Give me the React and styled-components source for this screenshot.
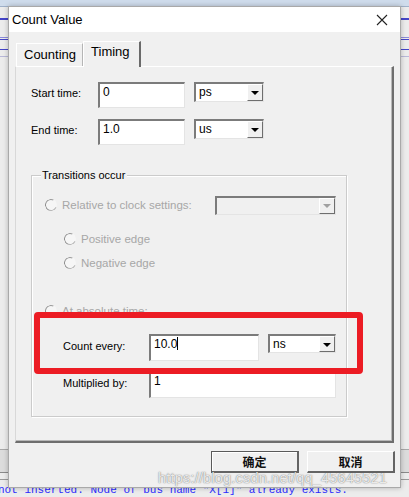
import React from "react";
import styled, { createGlobalStyle } from "styled-components";

const GlobalStyle = createGlobalStyle`
  html, body {
    margin: 0;
    padding: 0;
    background: #ececec;
  }
  body {
    font-family: "Liberation Sans", Arial, sans-serif;
  }
`;

const Screen = styled.div`
  position: relative;
  width: 409px;
  height: 497px;
  overflow: hidden;
  background: #ececec;
`;

const Backdrop = styled.div`
  display: flex;
  flex-direction: column;
  height: 100%;
`;

const TopBand = styled.div`
  height: 6px;
  background: #cfdcec;
  border-bottom: 1px solid #9fb0c8;
`;

const Rule = styled.div`
  height: ${(p) => p.$h || 1}px;
  margin-top: ${(p) => p.$mt || 0}px;
  background: ${(p) => p.$color || "#4545c8"};
`;

const Spacer = styled.div`
  flex: 1;
`;

const GreyBand = styled.div`
  height: 22px;
  background: #dcdcdc;
  border-top: 1px solid #a8a8a8;
  border-bottom: 1px solid #8a8a8a;
`;

const LogLine = styled.div`
  height: 13px;
  margin-top: 4px;
  margin-left: -2px;
  white-space: pre;
  font-family: "Liberation Mono", "Courier New", monospace;
  font-size: 11px;
  line-height: 13px;
  color: #2b2bff;
`;

const Dialog = styled.div`
  position: absolute;
  left: 8px;
  top: 6px;
  width: 393px;
  height: 482px;
  box-sizing: border-box;
  background: #f0f0f0;
  border: 1px solid #a9a9a9;
  box-shadow: 0 0 5px rgba(0, 0, 0, 0.25);
  display: flex;
  flex-direction: column;
`;

const TitleBar = styled.div`
  height: 25px;
  background: #ffffff;
  display: flex;
  align-items: center;
  justify-content: space-between;
  padding-left: 3px;
`;

const Title = styled.span`
  font-size: 13px;
  color: #000;
  margin-top: -1px;
`;

const CloseButton = styled.div`
  width: 36px;
  height: 25px;
  display: flex;
  align-items: center;
  justify-content: center;
`;

const Body = styled.div`
  flex: 1;
  display: flex;
  flex-direction: column;
  padding: 9px 0 0 6px;
`;

const TabStrip = styled.div`
  display: flex;
  align-items: flex-end;
  height: 25px;
  padding-left: 1px;
`;

const Tab = styled.div`
  box-sizing: border-box;
  height: ${(p) => (p.$active ? 26 : 23)}px;
  margin-bottom: ${(p) => (p.$active ? -1 : 0)}px;
  padding: ${(p) => (p.$active ? "2px 9px 0 7px" : "3px 6px 0 7px")};
  font-size: 13px;
  color: #000;
  background: #f0f0f0;
  border-top: 1px solid #ffffff;
  border-left: 1px solid #ffffff;
  border-right: ${(p) => (p.$active ? "2px solid #6a6a6a" : "1px solid #b5b5b5")};
  position: relative;
  z-index: ${(p) => (p.$active ? 2 : 1)};
`;

const Panel = styled.div`
  box-sizing: border-box;
  width: 379px;
  height: 377px;
  border-top: 1px solid #ffffff;
  border-left: 1px solid #d8d8d8;
  border-right: 2px solid #6e6e6e;
  border-bottom: 2px solid #6e6e6e;
  box-shadow: inset -1px -1px 0 #b8b8b8;
  padding: 15px 0 0 15px;
  display: flex;
  flex-direction: column;
`;

const FieldRow = styled.div`
  display: flex;
  align-items: flex-start;
  margin-top: ${(p) => p.$mt || 0}px;
  margin-left: ${(p) => p.$indent || 0}px;
`;

const Label = styled.span`
  width: ${(p) => p.$w}px;
  font-size: 11px;
  color: #000;
  line-height: ${(p) => p.$lh || 22}px;
  flex-shrink: 0;
`;

const TextBox = styled.div`
  box-sizing: border-box;
  width: ${(p) => p.$w}px;
  height: ${(p) => p.$h || 26}px;
  background: #ffffff;
  border-top: 2px solid #7b7b7b;
  border-left: 2px solid #7b7b7b;
  border-right: 1px solid #e4e4e4;
  border-bottom: 1px solid #e4e4e4;
  padding: 1px 0 0 3px;
  font-size: 12px;
  line-height: 14px;
  color: #000;
`;

const Caret = styled.span`
  display: inline-block;
  width: 1px;
  height: 13px;
  background: #000;
  vertical-align: -2px;
`;

const Select = styled.div`
  box-sizing: border-box;
  width: ${(p) => p.$w}px;
  height: ${(p) => p.$h || 20}px;
  margin-left: ${(p) => p.$ml || 0}px;
  background: ${(p) => (p.$disabled ? "#f0f0f0" : "#ffffff")};
  border-top: 2px solid #7b7b7b;
  border-left: 2px solid #7b7b7b;
  border-right: 1px solid #e4e4e4;
  border-bottom: 1px solid #e4e4e4;
  display: flex;
  align-items: stretch;
  justify-content: space-between;
  font-size: 12px;
  color: #000;
`;

const SelectText = styled.span`
  padding-left: 3px;
  line-height: 16px;
`;

const DropButton = styled.div`
  box-sizing: border-box;
  width: 16px;
  background: #f0f0f0;
  border-top: 1px solid #ffffff;
  border-left: 1px solid #ffffff;
  border-right: 1px solid #6e6e6e;
  border-bottom: 1px solid #6e6e6e;
  display: flex;
  align-items: center;
  justify-content: center;
  &::after {
    content: "";
    border-left: 4px solid transparent;
    border-right: 4px solid transparent;
    border-top: 4px solid ${(p) => (p.$disabled ? "#a0a0a0" : "#000")};
    margin-top: 1px;
  }
`;

const Group = styled.div`
  box-sizing: border-box;
  width: 316px;
  height: 242px;
  margin-top: 30px;
  border: 1px solid #cbcbcb;
  box-shadow: inset 1px 1px 0 #ffffff, 1px 1px 0 #ffffff;
  padding: 0 0 0 13px;
  display: flex;
  flex-direction: column;
`;

const Legend = styled.span`
  align-self: flex-start;
  margin: -8px 0 0 -4px;
  padding: 0 2px 0 1px;
  height: 14px;
  line-height: 14px;
  background: #f0f0f0;
  font-size: 11px;
  color: #000;
`;

const RadioRow = styled.div`
  display: flex;
  align-items: center;
  height: ${(p) => p.$h || 16}px;
  margin-top: ${(p) => p.$mt || 0}px;
  margin-left: ${(p) => p.$indent || 0}px;
`;

const Radio = styled.span`
  box-sizing: border-box;
  width: 12px;
  height: 12px;
  border-radius: 50%;
  border: 1.5px solid transparent;
  border-left-color: #8d8d8d;
  border-top-color: #9a9a9a;
  border-bottom-color: #b9b9b9;
  background: #f6f6f6;
  margin-right: 5px;
  transform: rotate(-20deg);
  flex-shrink: 0;
`;

const RadioLabel = styled.span`
  font-size: 11.5px;
  color: #a7a7a7;
  width: ${(p) => (p.$w ? `${p.$w}px` : "auto")};
`;

const ButtonRow = styled.div`
  display: flex;
  justify-content: flex-end;
  gap: 8px;
  margin-top: 8px;
  padding-right: 5px;
`;

const Button = styled.div`
  box-sizing: border-box;
  width: 88px;
  height: 22px;
  display: flex;
  align-items: center;
  justify-content: center;
  background: #f0f0f0;
  border-top: 1px solid ${(p) => (p.$default ? "#5a5a5a" : "#ffffff")};
  border-left: 1px solid ${(p) => (p.$default ? "#5a5a5a" : "#ffffff")};
  border-right: 2px solid #646464;
  border-bottom: 2px solid #646464;
  box-shadow: ${(p) => (p.$default ? "inset 1px 1px 0 #ffffff" : "none")};
  font-family: "Noto Sans CJK SC", sans-serif;
  font-size: 12px;
  font-weight: 700;
  color: #111;
`;

const Highlight = styled.div`
  position: absolute;
  left: 25px;
  top: 305px;
  width: 329px;
  height: 62px;
  box-sizing: border-box;
  border: 6px solid #ec1c24;
  border-radius: 4px;
  pointer-events: none;
`;

const Watermark = styled.div`
  position: absolute;
  left: 158px;
  top: 470px;
  font-family: "Liberation Sans", Arial, sans-serif;
  font-size: 14.5px;
  letter-spacing: 0.2px;
  color: rgba(255, 255, 255, 0.85);
  text-shadow: 0 0 1px rgba(60, 60, 60, 0.7), 0 0 2px rgba(120, 120, 120, 0.4);
  white-space: nowrap;
  pointer-events: none;
`;

const CloseIcon = () => (
  <svg width="12" height="12" viewBox="0 0 12 12">
    <path d="M1 1 L11 11 M11 1 L1 11" stroke="#222" strokeWidth="1.1" fill="none" />
  </svg>
);

const App = () => {
  return (
    <Screen>
      <GlobalStyle />
      <Backdrop>
        <TopBand />
        <Rule $mt={11} $h={2} />
        <Rule $mt={17} $color="#8d8dd8" />
        <Rule $mt={1} />
        <Rule $mt={9} />
        <Rule $mt={6} $color="#b8b8d8" />
        <Spacer />
        <GreyBand />
        <Rule $mt={6} $color="#9a9a9a" />
        <LogLine>not inserted. Node of bus name "X[1]" already exists.</LogLine>
      </Backdrop>

      <Dialog>
        <TitleBar>
          <Title>Count Value</Title>
          <CloseButton>
            <CloseIcon />
          </CloseButton>
        </TitleBar>

        <Body>
          <TabStrip>
            <Tab>Counting</Tab>
            <Tab $active>Timing</Tab>
          </TabStrip>

          <Panel>
            <FieldRow>
              <Label $w={67}>Start time:</Label>
              <TextBox $w={87}>0</TextBox>
              <Select $w={70} $ml={9}>
                <SelectText>ps</SelectText>
                <DropButton />
              </Select>
            </FieldRow>

            <FieldRow $mt={11}>
              <Label $w={67}>End time:</Label>
              <TextBox $w={87}>1.0</TextBox>
              <Select $w={70} $ml={9}>
                <SelectText>us</SelectText>
                <DropButton />
              </Select>
            </FieldRow>

            <Group>
              <Legend>Transitions occur</Legend>

              <RadioRow $mt={14} $h={18}>
                <Radio />
                <RadioLabel $w={153}>Relative to clock settings:</RadioLabel>
                <Select $w={121} $h={19} $disabled>
                  <span />
                  <DropButton $disabled />
                </Select>
              </RadioRow>

              <RadioRow $mt={17} $indent={19}>
                <Radio />
                <RadioLabel>Positive edge</RadioLabel>
              </RadioRow>

              <RadioRow $mt={8} $indent={19}>
                <Radio />
                <RadioLabel>Negative edge</RadioLabel>
              </RadioRow>

              <RadioRow $mt={32}>
                <Radio />
                <RadioLabel>At absolute time:</RadioLabel>
              </RadioRow>

              <FieldRow $mt={15} $indent={18}>
                <Label $w={86} $lh={24}>Count every:</Label>
                <TextBox $w={110} $h={27}>
                  10.0
                  <Caret />
                </TextBox>
                <Select $w={68} $h={19} $ml={9}>
                  <SelectText>ns</SelectText>
                  <DropButton />
                </Select>
              </FieldRow>

              <FieldRow $mt={10} $indent={18}>
                <Label $w={86} $lh={24}>Multiplied by:</Label>
                <TextBox $w={187} $h={27}>1</TextBox>
              </FieldRow>
            </Group>
          </Panel>

          <ButtonRow>
            <Button $default>确定</Button>
            <Button>取消</Button>
          </ButtonRow>
        </Body>

        <Highlight />
      </Dialog>

      <Watermark>https://blog.csdn.net/qq_45645521</Watermark>
    </Screen>
  );
};

export default App;
